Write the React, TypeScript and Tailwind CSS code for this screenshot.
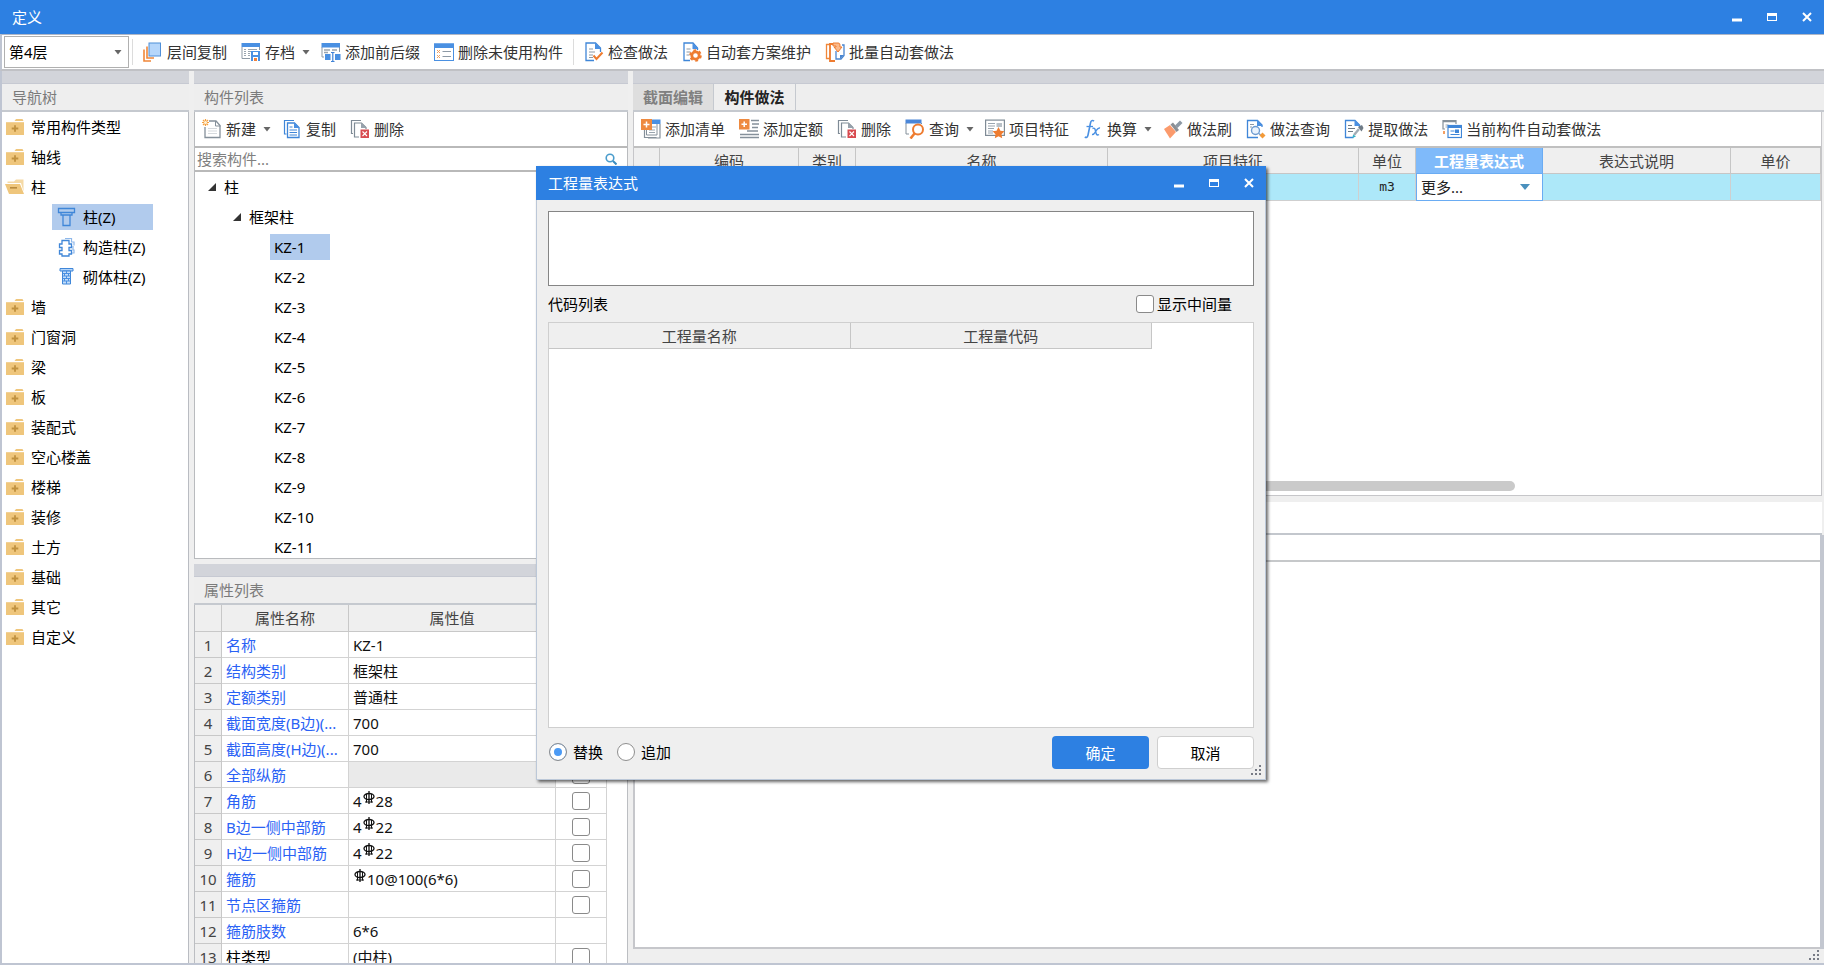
import type { ReactNode } from "react";

const Svg = ({ children }: { children: ReactNode }) => (
  <svg viewBox="0 0 20 20" className="size-5 shrink-0" fill="none" aria-hidden="true">
    {children}
  </svg>
);

const icons = {
  layers: (
    <Svg>
      <path d="M1 7.500V19h7M4 4.500V16h7" stroke="#f0873a" strokeWidth="1.600" />
      <rect x="6" y="1" width="11.500" height="13" fill="#b5d6fb" stroke="#4f8fd8" />
    </Svg>
  ),
  archive: (
    <Svg>
      <path d="M1 5v11.500h8M18.500 5v3" stroke="#8d99a5" />
      <rect x="0.500" y="1" width="18.500" height="4" fill="#4a90e2" />
      <path d="M3 7.500h2M3 9.500h2M3 11.500h2M3 13.500h2M7 7.500h9M7 9.500h3M7 11.500h2M7 13.500h2" stroke="#9aa5af" />
      <rect x="10" y="9" width="9" height="10" fill="#4a90e2" />
      <path d="M12 10h5v3h-5z" fill="#fff" />
      <path d="M12 15h5v4h-5z" fill="#fff" />
      <path d="M13 16h3v3h-3z" fill="#f0803a" />
    </Svg>
  ),
  affix: (
    <Svg>
      <path d="M1 5v10h2M18.500 5v5" stroke="#8d99a5" />
      <rect x="0.500" y="1" width="18.500" height="4.500" fill="#4a90e2" />
      <path d="M3 8h6M3 10.500h4M11 8h5" stroke="#9aa5af" strokeWidth="1.400" />
      <rect x="4" y="12" width="5.500" height="6" fill="#4a90e2" />
      <rect x="14" y="12" width="5.500" height="6" fill="#4a90e2" />
      <path d="M10 10.500h3.500M11.800 10.500v9M10 19.500h3.500" stroke="#3f82d6" strokeWidth="1.200" />
    </Svg>
  ),
  unused: (
    <Svg>
      <rect x="0.500" y="2" width="19" height="16.500" fill="#fff" stroke="#4a90e2" />
      <rect x="0" y="1.500" width="20" height="4.500" fill="#4a90e2" />
      <path d="m3 8 3 3m0-3-3 3M3 13l3 3m0-3-3 3" stroke="#f0a060" />
      <path d="M8.500 9.500h8.500M8.500 14.500h8.500" stroke="#8d99a5" strokeWidth="1.200" />
    </Svg>
  ),
  check: (
    <Svg>
      <path d="M16.500 10V6l-5-5H2v17.500h8" stroke="#3f86d8" strokeWidth="1.300" />
      <path d="M11 1v6h6" fill="#4a90e2" />
      <path d="M5 7h4M5 10h6M5 13h4M5 15.500h4" stroke="#8d99a5" strokeWidth="1.200" />
      <path d="m9.500 13.500 3 3.500 6-6.500" stroke="#ee7c30" strokeWidth="2" />
    </Svg>
  ),
  plan: (
    <Svg>
      <path d="M15.500 8V6l-4.500-5H2v17.500h6" stroke="#3f86d8" strokeWidth="1.300" />
      <path d="M10.500 1v6h6" fill="#4a90e2" />
      <path d="M4.500 7h4M4.500 10h4M4.500 13h3" stroke="#8d99a5" strokeWidth="1.200" />
      <circle cx="13.500" cy="13.500" r="3.700" stroke="#ee7c30" strokeWidth="2.800" />
      <circle cx="13.500" cy="13.500" r="5.400" stroke="#ee7c30" strokeWidth="1.800" strokeDasharray="2.800 2.850" />
    </Svg>
  ),
  batch: (
    <Svg>
      <path d="M5 2.500H1.500v14H5" stroke="#f0873a" strokeWidth="1.300" />
      <path d="M9 2H5v17h5" stroke="#ee7c30" strokeWidth="1.800" />
      <path d="M17 3h2v10.500L16 17h-5V9" stroke="#4a86d0" strokeWidth="1.300" />
      <path d="M19 13h-4v4z" fill="#4a86d0" />
      <path d="M8 1h5c2 0 2 1 2 4h2l-4 5-4-5h2V4H8z" fill="#fbb98a" stroke="#ee7c30" />
    </Svg>
  ),
  create: (
    <Svg>
      <path d="M7 2h7l4 4.500v12H3V8" stroke="#85909a" strokeWidth="1.300" />
      <path d="M13.500 2v5h5" stroke="#85909a" />
      <path d="M6 9.500h9M6 12h9M6 14.500h9" stroke="#d5d9dd" />
      <path d="M3.500 0v7M0 3.500h7M1 1l5 5M6 1 1 6" stroke="#f5a040" strokeWidth="1.200" />
      <circle cx="3.500" cy="3.500" r="1.500" fill="#fff3d8" />
    </Svg>
  ),
  copy: (
    <Svg>
      <path d="M4.500 15H2.500V1.500H12" stroke="#3f86d8" strokeWidth="1.200" />
      <path d="M5.500 4h7l4.500 4.500v10H5.500z" fill="#fff" stroke="#3f86d8" strokeWidth="1.300" />
      <path d="M12 3.500v5.500h5.500" fill="#4a90e2" />
      <path d="M7.500 8h3M7.500 11h7.500M7.500 13.500h7.500M7.500 16h7.500" stroke="#3f86d8" />
    </Svg>
  ),
  remove: (
    <Svg>
      <path d="M3 14.500H1.500v-13H11" stroke="#7f8b96" strokeWidth="1.200" />
      <path d="M9 18H4.500V4h7l4.500 4.500V10" stroke="#7f8b96" strokeWidth="1.200" />
      <path d="M11 4v5h5" fill="#98a3ad" />
      <rect x="10.500" y="10.500" width="8.500" height="8.500" fill="#d84b50" />
      <path d="m12.500 12.500 4.500 4.500m0-4.500L12.500 17" stroke="#fff" strokeWidth="1.100" />
    </Svg>
  ),
  addList: (
    <Svg>
      <path d="M3.500 11v7.500h12M19 5v14H7" stroke="#85909a" strokeWidth="1.200" />
      <rect x="10" y="0.500" width="9.500" height="4.500" fill="#4a90e2" />
      <path d="M16 5v11H5.500v-5" stroke="#85909a" />
      <path d="M11 8h4M8 11h6M8 13.500h6" stroke="#9aa5af" />
      <rect x="0" y="0" width="11" height="11" fill="#ee8a40" />
      <path d="M5.500 2.500v6M2.500 5.500h6" stroke="#fff" strokeWidth="1.500" />
    </Svg>
  ),
  addQuota: (
    <Svg>
      <path d="M12 1.500h8M13 5h7M13 8.500h6M8 12h11M1 15.500h19M1 18.500h19" stroke="#85909a" strokeWidth="1.300" />
      <rect x="0" y="0" width="10.500" height="10.500" fill="#ee8a40" />
      <path d="M5.200 2.500v5.500M2.500 5.200h5.500" stroke="#fff" strokeWidth="1.500" />
    </Svg>
  ),
  query: (
    <Svg>
      <path d="M1 4v11h3M16.500 4v1" stroke="#85909a" />
      <rect x="0.500" y="0.500" width="16" height="4" fill="#4a86d8" />
      <circle cx="13" cy="10.500" r="5" fill="#fff" stroke="#ee7c30" strokeWidth="2" />
      <path d="m9.500 14.500-4 5" stroke="#ee7c30" strokeWidth="2.600" />
    </Svg>
  ),
  feature: (
    <Svg>
      <rect x="0.600" y="1.100" width="18.800" height="15.300" stroke="#7f8b96" strokeWidth="1.200" />
      <path d="M3 4.500h7M3 7h7M3 9.500h6M3 12h5M3 14h5" stroke="#9aa5af" />
      <rect x="11.500" y="4" width="5.500" height="4" fill="#b8c0c7" />
      <path d="m13.500 8 1.900 3.700 4.100.6-3 2.900.7 4.100-3.700-2-3.700 2 .7-4.100-3-2.900 4.100-.6z" fill="#ee7c30" />
    </Svg>
  ),
  fx: (
    <Svg>
      <path d="M11 2.200C9.500.8 8 1.500 7.500 4L5 16c-.5 2.300-1.600 3-3.200 2" stroke="#4a90e2" strokeWidth="1.600" />
      <path d="M3.500 7.500h6.500" stroke="#4a90e2" strokeWidth="1.300" />
      <path d="M9.500 9.500c2-1 2.500 0 3 2.500s1 5 3.500 3.500M17 9c-2-.5-3 1.500-4 3s-2 4-4 3.500" stroke="#4a90e2" strokeWidth="1.400" />
    </Svg>
  ),
  brush: (
    <Svg>
      <path d="m1 10 6-4 6 7-6 6.500z" fill="#fb9a6c" />
      <path d="m7.500 5.500 2.500-2 6 7.500-2.500 2z" fill="#8b8f94" />
      <path d="m12 6.500 5-5 2.500 2.500-5 5z" fill="#8d99a5" />
    </Svg>
  ),
  docSearch: (
    <Svg>
      <path d="M16 8V6l-4.500-4.500H1.500v17H12" stroke="#3f86d8" strokeWidth="1.300" />
      <path d="M11 1v6h5.500" fill="#4a90e2" />
      <path d="M4 5.500h4M4 8h2" stroke="#8d99a5" />
      <circle cx="9.500" cy="11.500" r="4" fill="#eaf3fd" stroke="#6d9bd0" strokeWidth="1.400" />
      <path d="m13 14.500 1.500 1.500" stroke="#6d9bd0" strokeWidth="1.400" />
      <path d="m16.500 13.500 3 3-3 3-3-3z" fill="#f39a38" />
    </Svg>
  ),
  extract: (
    <Svg>
      <path d="M15.500 8V6L11 1.500H1.500v17h8" stroke="#3f86d8" strokeWidth="1.300" />
      <path d="M10.500 1v6h6" fill="#4a90e2" />
      <path d="M4 6.500h4M4 9.500h7M4 12.500h5" stroke="#6f7b86" strokeWidth="1.200" />
      <path d="m14 8 4-2 1.500 3-2 3.500z" fill="#6f7b86" />
      <path d="m15 10-5 6" stroke="#a2acb5" strokeWidth="2.400" />
      <path d="m8.500 19 .5-3.500 3 2z" fill="#35b4c8" />
    </Svg>
  ),
  auto: (
    <Svg>
      <path d="M14 5V1.500H1V10h2" stroke="#85909a" strokeWidth="1.200" />
      <path d="M1 2.500h13" stroke="#85909a" strokeWidth="1.500" />
      <path d="M3.500 6h3M3.500 8h2" stroke="#9aa5af" />
      <rect x="6" y="6.500" width="13.500" height="12" fill="#fff" stroke="#3f86d8" strokeWidth="1.200" />
      <path d="M6 8h13.500" stroke="#3f86d8" strokeWidth="2" />
      <path d="M8.500 12h4M8.500 15.500h9" stroke="#3f86d8" />
      <rect x="13" y="10.500" width="4" height="3.500" fill="#3f86d8" />
      <path d="M2 12v3" stroke="#f0873a" strokeWidth="1.600" />
    </Svg>
  ),
  column: (
    <Svg>
      <path d="M1.500 1.500h16v4h-16zM4 5.500h11v2.500H4zM6 8h7v10.500H6z" stroke="#3f86d8" strokeWidth="1.300" />
    </Svg>
  ),
  tieColumn: (
    <Svg>
      <path d="M8 1.500h6.500V5H17v3.500M16 9v4h1v3h-3" stroke="#8fb8ea" strokeWidth="1.200" />
      <path d="M5 3.500h7V7h2.500v3.500H12v3h2.500V17H12v2H5v-2H2.500v-3.500H5v-3H2.500V7H5z" fill="#fff" stroke="#3f86d8" strokeWidth="1.300" />
    </Svg>
  ),
  masonry: (
    <Svg>
      <path d="M3 1.500h13v2.500H3z" fill="#b5d6fb" stroke="#3f86d8" />
      <path d="M5.500 4h8v13h-8z" fill="#c4defa" stroke="#3f86d8" />
      <path d="M5.500 6.500h8M5.500 9h8M5.500 11.500h8M5.500 14h8M9.500 4v2.500M7.500 6.500V9M11.500 6.500V9M9.500 9v2.500M7.500 11.500V14M11.500 11.500V14M9.500 14v3" stroke="#4a90e2" />
    </Svg>
  ),
};

const FolderIcon = ({ open = false }: { open?: boolean }) => (
  <svg viewBox="0 0 20 17" className="h-[17px] w-5 shrink-0" aria-hidden="true">
    {open ? (
      <>
        <path d="M9 2.500 11 .5h7.500v12L16 4H2.500V2.500z" fill="#f5d9a5" />
        <path d="M0 5h15l4 10H4z" fill="#efc67c" />
        <path d="M5 8.800h7" stroke="#b98b3f" strokeWidth="1.600" />
      </>
    ) : (
      <>
        <path d="M9.500 2 11 0h6.500l1 2z" fill="#efc67c" />
        <path d="M1 3.200h18V16H1z" fill="#efc67c" />
        <path d="M10 6.200v6.600M6.700 9.500h6.600" stroke="#c0913f" strokeWidth="1.800" />
      </>
    )}
  </svg>
);

// HRB400 bar mark
const Rebar = () => (
  <svg viewBox="0 0 14 14" className="inline-block size-[14px] align-top" fill="none" stroke="#111" aria-label="HRB400">
    <ellipse cx="7" cy="5.500" rx="5" ry="3" strokeWidth="1.300" />
    <path d="M7 0v13" strokeWidth="1.300" />
    <path d="M4.500 3v8.500M9.500 3v8.500M3 11h8" />
  </svg>
);

const Caret = () => (
  <svg viewBox="0 0 8 5" className="h-[5px] w-2" aria-hidden="true">
    <path d="M.5 0h7L4 4.500z" fill="#666" />
  </svg>
);

const Grip = () => (
  <svg viewBox="0 0 10 10" className="size-[10px]" fill="#777b85" aria-hidden="true">
    <path d="M8 0h2v2H8zM4 4h2v2H4zM8 4h2v2H8zM0 8h2v2H0zM4 8h2v2H4zM8 8h2v2H8z" />
  </svg>
);

type ToolProps = { icon: keyof typeof icons; label: string; menu?: boolean };

const Tool = ({ icon, label, menu }: ToolProps) => (
  <div className="flex shrink-0 items-center">
    <button className="flex h-7 items-center gap-1 rounded px-[7px] whitespace-nowrap text-[#333] hover:bg-gray-100">
      {icons[icon]}
      {label}
    </button>
    {menu && (
      <button className="flex h-7 w-3 items-center" aria-label={label + "菜单"}>
        <Caret />
      </button>
    )}
  </div>
);

const TitleBar = ({ title }: { title: string }) => (
  <div className="flex h-[34px] shrink-0 items-center justify-between bg-[#2d80e2] pl-3 text-white">
    <h1>{title}</h1>
    <div className="flex h-full">
      <button className="grid w-[35px] place-items-center" aria-label="最小化">
        <svg viewBox="0 0 10 10" className="size-[10px]"><path d="M0 6.500h10v3H0z" fill="#fff" /></svg>
      </button>
      <button className="grid w-[35px] place-items-center" aria-label="最大化">
        <svg viewBox="0 0 10 10" className="size-[10px]"><path d="M0 1h10v8H0zM1 4v4h8V4z" fill="#fff" fillRule="evenodd" /></svg>
      </button>
      <button className="grid w-[35px] place-items-center" aria-label="关闭">
        <svg viewBox="0 0 10 10" className="size-[10px]"><path d="m1 1 8 8m0-8L1 9" stroke="#fff" strokeWidth="2" /></svg>
      </button>
    </div>
  </div>
);

const PanelHead = ({ title }: { title: string }) => (
  <>
    <div className="h-[13px] shrink-0 border-b border-[#c6c9d2] bg-[#d2d4da]" />
    <h2 className="flex h-7 shrink-0 items-center border-b-2 border-[#c5c9cf] bg-[#eee] pl-[10px] text-[#7b7b7b]">{title}</h2>
  </>
);

const navBefore = ["常用构件类型", "轴线"];
const navAfter = ["墙", "门窗洞", "梁", "板", "装配式", "空心楼盖", "楼梯", "装修", "土方", "基础", "其它", "自定义"];
const columnTypes: { icon: keyof typeof icons; label: string }[] = [
  { icon: "column", label: "柱(Z)" },
  { icon: "tieColumn", label: "构造柱(Z)" },
  { icon: "masonry", label: "砌体柱(Z)" },
];

const NavItem = ({ label, open }: { label: string; open?: boolean }) => (
  <button className="flex h-[30px] items-center gap-[6px] pl-[3px]">
    <FolderIcon open={open} />
    {label}
  </button>
);

const NavTree = () => (
  <aside className="flex w-[187px] shrink-0 flex-col">
    <PanelHead title="导航树" />
    <ul className="flex-1 border-r border-[#b9bcc2] bg-white text-black">
      {navBefore.map((label) => (
        <li key={label}><NavItem label={label} /></li>
      ))}
      <li>
        <NavItem label="柱" open />
        <ul>
          {columnTypes.map(({ icon, label }, i) => (
            <li key={label} className="flex h-[30px] items-center pl-[50px]">
              <button className={`flex h-[26px] w-[101px] items-center gap-[6px] pl-[5px] ${i === 0 ? "bg-[#b1cbed]" : ""}`}>
                {icons[icon]}
                {label}
              </button>
            </li>
          ))}
        </ul>
      </li>
      {navAfter.map((label) => (
        <li key={label}><NavItem label={label} /></li>
      ))}
    </ul>
  </aside>
);

const TreeArrow = () => (
  <svg viewBox="0 0 8 8" className="size-2 shrink-0" aria-hidden="true">
    <path d="M8 0v8H0z" fill="#333" />
  </svg>
);

const members = Array.from({ length: 11 }, (_, i) => `KZ-${i + 1}`);

type Prop = { name: string; value: ReactNode; check?: boolean; locked?: boolean; plain?: boolean };

const props: Prop[] = [
  { name: "名称", value: "KZ-1" },
  { name: "结构类别", value: "框架柱", check: true },
  { name: "定额类别", value: "普通柱", check: true },
  { name: "截面宽度(B边)(...", value: "700", check: true },
  { name: "截面高度(H边)(...", value: "700", check: true },
  { name: "全部纵筋", value: "", check: true, locked: true },
  { name: "角筋", value: <>4<Rebar />28</>, check: true },
  { name: "B边一侧中部筋", value: <>4<Rebar />22</>, check: true },
  { name: "H边一侧中部筋", value: <>4<Rebar />22</>, check: true },
  { name: "箍筋", value: <><Rebar />10@100(6*6)</>, check: true },
  { name: "节点区箍筋", value: "", check: true },
  { name: "箍筋肢数", value: "6*6" },
  { name: "柱类型", value: "(中柱)", check: true, plain: true },
];

const PropTable = () => (
  <table className="w-[412px] table-fixed border-separate border-spacing-0">
    <colgroup>
      <col className="w-[27px]" />
      <col className="w-[127px]" />
      <col className="w-[207px]" />
      <col className="w-[51px]" />
    </colgroup>
    <thead>
      <tr className="h-[27px] text-[#444]">
        {["", "属性名称", "属性值", "附加"].map((h) => (
          <th key={h} className="border-r border-b border-[#c8c8c8] bg-[#efefef] p-0 font-normal">{h}</th>
        ))}
      </tr>
    </thead>
    <tbody>
      {props.map(({ name, value, check, locked, plain }, i) => (
        <tr key={name} className="h-[26px]">
          <td className="border-r border-b border-[#c8c8c8] bg-[#efefef] p-0 text-center text-[#444]">{i + 1}</td>
          <td className={`border-r border-b border-[#d3d3d3] p-0 pl-1 whitespace-nowrap ${plain ? "text-black" : "text-[#2a62f5]"}`}>{name}</td>
          <td className={`border-r border-b border-[#d3d3d3] p-0 pl-1 text-[#111] ${locked ? "bg-[#eaeaea]" : ""}`}>{value}</td>
          <td className="border-r border-b border-[#d3d3d3] p-0">
            {check && (
              <input type="checkbox" aria-label={name} className="mx-auto block size-[18px] appearance-none rounded-[3px] border border-[#8a8a8a] bg-white checked:bg-[#4a9af5]" />
            )}
          </td>
        </tr>
      ))}
    </tbody>
  </table>
);

const MemberPanel = () => (
  <section className="flex w-[434px] shrink-0 flex-col">
    <PanelHead title="构件列表" />
    <div className="flex h-[447px] shrink-0 flex-col overflow-hidden border border-t-0 border-[#b9bbbe] bg-white">
      <div className="flex h-[34px] shrink-0 items-center">
        <Tool icon="create" label="新建" menu />
        <Tool icon="copy" label="复制" />
        <Tool icon="remove" label="删除" />
      </div>
      <label className="flex h-[26px] shrink-0 items-center border-y-2 border-[#b9b9b9] pr-[10px] pl-[2px]">
        <input type="text" aria-label="搜索构件" placeholder="搜索构件..." className="min-w-0 flex-1 outline-none placeholder:text-[#808080]" />
        <svg viewBox="0 0 12 12" className="size-3" fill="none" aria-hidden="true">
          <circle cx="5" cy="5" r="3.800" stroke="#4a9ccc" strokeWidth="1.600" />
          <path d="m8 8 3.500 3.500" stroke="#3a8cc0" strokeWidth="2" />
        </svg>
      </label>
      <ul className="text-black">
        <li>
          <button className="flex h-[30px] items-center gap-2 pl-[13px]"><TreeArrow />柱</button>
          <ul>
            <li>
              <button className="flex h-[30px] items-center gap-2 pl-[38px]"><TreeArrow />框架柱</button>
              <ul>
                {members.map((m, i) => (
                  <li key={m} className="flex h-[30px] items-center pl-[75px]">
                    <button className={`h-[26px] w-[60px] pl-1 text-left ${i === 0 ? "bg-[#b1cbed]" : ""}`}>{m}</button>
                  </li>
                ))}
              </ul>
            </li>
          </ul>
        </li>
      </ul>
    </div>
    <div className="h-[5px] shrink-0" />
    <PanelHead title="属性列表" />
    <div className="min-h-0 flex-1 overflow-hidden border-x border-[#bcbec2] bg-white">
      <PropTable />
    </div>
  </section>
);

const headCell = "border-r border-b border-[#c6c6c6] p-0 font-normal";
const rowCell = "border-r border-b border-[#cfcfcf] p-0";

const MethodPanel = () => (
  <section className="flex min-w-0 flex-1 flex-col">
    <div className="h-[13px] shrink-0 border-b border-[#c6c9d2] bg-[#d2d4da]" />
    <div className="flex h-7 shrink-0 border-b-2 border-[#c5c9cf] bg-[#eee] font-bold">
      <button className="w-[81px] border-r border-[#c5c9cf] bg-[#dedede] text-[#808080]">截面编辑</button>
      <button className="w-[82px] border-r border-[#c5c9cf] text-[#222]">构件做法</button>
    </div>
    <div className="mr-[2px] flex h-[384px] shrink-0 flex-col border border-t-0 border-[#c6c6c9] bg-white">
      <div className="flex h-9 shrink-0 items-center border-b-2 border-[#c0c0c0]">
        <Tool icon="addList" label="添加清单" />
        <Tool icon="addQuota" label="添加定额" />
        <Tool icon="remove" label="删除" />
        <Tool icon="query" label="查询" menu />
        <Tool icon="feature" label="项目特征" />
        <Tool icon="fx" label="换算" menu />
        <Tool icon="brush" label="做法刷" />
        <Tool icon="docSearch" label="做法查询" />
        <Tool icon="extract" label="提取做法" />
        <Tool icon="auto" label="当前构件自动套做法" />
      </div>
      <table className="w-full table-fixed border-separate border-spacing-0">
        <colgroup>
          <col className="w-[26px]" />
          <col className="w-[139px]" />
          <col className="w-[57px]" />
          <col className="w-[252px]" />
          <col className="w-[251px]" />
          <col className="w-[57px]" />
          <col className="w-[127px]" />
          <col className="w-[188px]" />
          <col />
        </colgroup>
        <thead>
          <tr className="h-[26px] bg-[#efefef] text-[#444]">
            <th className={headCell} />
            <th className={headCell}>编码</th>
            <th className={headCell}>类别</th>
            <th className={headCell}>名称</th>
            <th className={headCell}>项目特征</th>
            <th className={headCell}>单位</th>
            <th className="border-r border-b border-[#6aacf3] bg-[#7fbafa] p-0 font-bold text-white">工程量表达式</th>
            <th className={headCell}>表达式说明</th>
            <th className={headCell}>单价</th>
          </tr>
        </thead>
        <tbody>
          <tr className="h-[27px] bg-[#ade8f9] text-[#222]">
            <td className={rowCell} />
            <td className={rowCell} />
            <td className={rowCell} />
            <td className={rowCell} />
            <td className={rowCell} />
            <td className={rowCell + " text-center font-['DejaVu_Sans_Mono',monospace] text-[13px]"}>m3</td>
            <td className="border border-t-0 border-[#6aacf3] bg-white p-0 pr-3 pl-1">
              <button className="flex w-full items-center justify-between">
                更多...
                <svg viewBox="0 0 10 6" className="h-[6px] w-[10px]" aria-hidden="true"><path d="M0 0h10L5 6z" fill="#4a90bd" /></svg>
              </button>
            </td>
            <td className={rowCell} />
            <td className={rowCell} />
          </tr>
        </tbody>
      </table>
      <div className="mt-auto mb-1 ml-1 h-[10px] w-[877px] rounded-full bg-[#cacaca]" />
    </div>
    <div className="mt-[6px] mr-[2px] h-[33px] shrink-0 border-b-2 border-[#c3c7cd] bg-white" />
    <div className="flex min-h-0 flex-1 flex-col border-r-4 border-l-2 border-r-[#c3c7d0] border-l-[#c6c7cb] bg-white">
      <div className="h-[27px] shrink-0 border-b-2 border-[#c6c8ca]" />
      <div className="flex-1 border-b-2 border-[#c6c7cb]" />
    </div>
    <div className="flex h-[14px] shrink-0 justify-end pt-px pr-[5px]"><Grip /></div>
  </section>
);

const radioClass =
  "size-[18px] appearance-none rounded-full border border-[#8f8f8f] bg-white checked:bg-[#4a9af5] checked:shadow-[inset_0_0_0_4px_white]";

const ExpressionDialog = () => (
  <div role="dialog" aria-label="工程量表达式" className="absolute top-[166px] left-[536px] flex h-[614px] w-[730px] flex-col bg-[#efefef] text-black shadow-[2px_2px_3px_rgba(0,0,0,0.6)]">
    <TitleBar title="工程量表达式" />
    <div className="flex min-h-0 flex-1 flex-col border border-t-0 border-[#bcc8d8] px-[11px] pt-[11px]">
      <textarea aria-label="表达式" className="h-[75px] shrink-0 resize-none border border-[#858585] bg-white p-1 outline-none" />
      <div className="flex h-9 shrink-0 items-center justify-between pr-[22px]">
        <h2>代码列表</h2>
        <label className="flex items-center gap-[3px]">
          <input type="checkbox" className="size-[18px] appearance-none rounded-[3px] border border-[#8a8a8a] bg-white checked:bg-[#4a9af5]" />
          显示中间量
        </label>
      </div>
      <div className="min-h-0 flex-1 border border-[#cfcfcf] bg-white">
        <table className="w-[603px] table-fixed border-separate border-spacing-0">
          <thead>
            <tr className="h-[26px] bg-[#efefef] text-[#444]">
              <th className={headCell}>工程量名称</th>
              <th className={headCell}>工程量代码</th>
            </tr>
          </thead>
        </table>
      </div>
      <div className="flex h-[51px] shrink-0 items-start pt-2 pl-px">
        <div className="flex h-8 items-center gap-[14px]">
          <label className="flex items-center gap-[6px]">
            <input type="radio" name="mode" defaultChecked className={radioClass} />
            替换
          </label>
          <label className="flex items-center gap-[6px]">
            <input type="radio" name="mode" className={radioClass} />
            追加
          </label>
        </div>
        <button className="ml-auto h-[33px] w-[97px] rounded bg-[#2d80e2] text-white">确定</button>
        <button className="ml-2 h-[33px] w-[97px] rounded border border-[#cfcfcf] bg-white">取消</button>
      </div>
    </div>
    <div className="absolute right-[5px] bottom-[5px]"><Grip /></div>
  </div>
);

const App = () => {
  return (
    <div className="relative flex h-screen flex-col overflow-hidden bg-[#efefef] font-['Noto_Sans','Noto_Sans_CJK_SC',sans-serif] text-[15px] leading-5">
      <TitleBar title="定义" />
      <div className="flex h-[37px] shrink-0 items-center border-t border-b-2 border-l-2 border-t-[#aeb6c6] border-b-[#c0c1c5] border-l-[#bfc5d2] bg-white pl-[2px]">
        <div className="relative">
          <select aria-label="楼层" className="h-8 w-[125px] appearance-none border border-[#b0b0b0] bg-white pl-1 text-black">
            <option>第4层</option>
          </select>
          <div className="pointer-events-none absolute top-[14px] right-[7px]"><Caret /></div>
        </div>
        <div className="mx-[3px] h-[26px] w-px bg-[#dcdcdc]" />
        <Tool icon="layers" label="层间复制" />
        <Tool icon="archive" label="存档" menu />
        <Tool icon="affix" label="添加前后缀" />
        <Tool icon="unused" label="删除未使用构件" />
        <div className="mx-[3px] h-[26px] w-px bg-[#dcdcdc]" />
        <Tool icon="check" label="检查做法" />
        <Tool icon="plan" label="自动套方案维护" />
        <Tool icon="batch" label="批量自动套做法" />
      </div>
      <div className="flex min-h-0 flex-1 gap-[5px] border-b-2 border-l-2 border-[#bfc5d2]">
        <NavTree />
        <MemberPanel />
        <MethodPanel />
      </div>
      <ExpressionDialog />
    </div>
  );
};

export default App;
